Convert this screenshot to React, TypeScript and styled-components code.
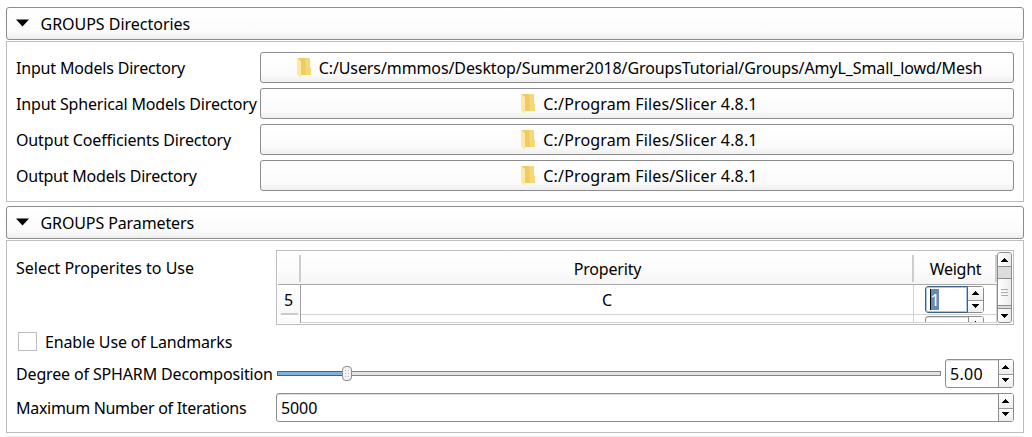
import React from "react";
import styled, { createGlobalStyle } from "styled-components";

const Global = createGlobalStyle`
  * { box-sizing: border-box; }
  body { margin: 0; background: #fff; color: #000; font: 16px/20px "Noto Sans", sans-serif; }
`;
const Page = styled.main`
  width: 1032px; height: 437px; padding: 7px 8px 0 6px; overflow: hidden;
  display: flex; flex-direction: column;
`;
const SectionHeader = styled.header`
  height: 33px; flex: none; display: flex; align-items: center; padding-left: 9px;
  border: 1px solid #8c8c8c; border-radius: 3px;
  background: linear-gradient(#fff, #fbfbfb 75%, #efefef);
`;
const HeaderArrow = styled.svg`
  width: 13px; height: 8px; margin: -2px 11.5px 0 0;
`;
const Panel = styled.section<{ $h: number; $pad: number }>`
  height: ${(p) => p.$h}px; flex: none; margin: 1px 0 4px; padding: ${(p) => p.$pad}px 9px 0;
  border: 1px solid #bdbdbd; display: flex; flex-direction: column;
`;
const NextSection = styled.div`
  height: 1px; flex: none; margin: -1px 2px 0; background: #ededed;
`;
const Text = styled.span<{ $s?: number }>`
  white-space: pre; letter-spacing: ${(p) => p.$s ?? 0}px;
`;
const DirectoryRow = styled.div`
  display: grid; grid-template-columns: 244px 754px; align-items: center;
  height: 31px; margin-bottom: 5px;
`;
const DirectoryButton = styled.button`
  height: 31px; padding: 0; display: flex; align-items: center; justify-content: center;
  border: 1px solid #8c8c8c; border-radius: 3px; font: inherit; color: inherit;
  background: linear-gradient(#fff, #fbfbfb 75%, #efefef);
`;
const FolderSlot = styled.svg`
  width: 26px; height: 22px; flex: none; margin-right: 1px;
`;
const FormRow = styled.div<{ $h: number; $gap: number; $top?: boolean }>`
  display: grid; grid-template-columns: 260px 738px;
  align-items: ${(p) => (p.$top ? "start" : "center")};
  height: ${(p) => p.$h}px; margin-bottom: ${(p) => p.$gap}px; flex: none;
`;
const TopLabel = styled.div`
  padding-top: 8px;
`;
const Table = styled.div`
  width: 738px; height: 75px; border: 1px solid #bdbdbd; padding: 1px;
  display: flex; background: #fff;
`;
const Grid = styled.div`
  width: 719px; height: 71px; overflow: hidden;
  display: grid; grid-template-columns: 23px 613px 83px; grid-template-rows: 33px 30px 8px;
`;
const HeadCell = styled.div`
  display: flex; justify-content: center; padding-top: 7px;
  border-bottom: 1px solid #a8a8a8;
  background:
    linear-gradient(#cdcdcd, #cdcdcd) right 3px / 2px 27px no-repeat,
    linear-gradient(#fff, #fbfbfb 60%, #f5f5f5);
`;
const RowHead = styled.div`
  display: flex; justify-content: center; padding: 5px 1px 0 0; border-right: 1px solid #a0a0a0;
  background:
    linear-gradient(#cbcbcb, #cbcbcb) 3px 28px / 17px 2px no-repeat,
    linear-gradient(#fff, #f8f8f8);
`;
const Cell = styled.div`
  display: flex; justify-content: center; padding-top: 5px;
  border-right: 1px solid #d2d2d2; border-bottom: 1px solid #d2d2d2;
`;
const WeightCell = styled(Cell)`
  justify-content: flex-start; padding: 1px 0 0 11px; overflow: hidden;
`;
const Spin = styled.div<{ $w: number; $h: number }>`
  width: ${(p) => p.$w}px; height: ${(p) => p.$h}px; flex: none; display: flex; overflow: hidden;
  border: 1px solid #8c8c8c; border-radius: 3px; background: #fff;
  box-shadow: inset 0 1px 0 #dedede;
`;
const SpinValue = styled.div`
  flex: 1; display: flex; align-items: center; padding-left: 4px;
`;
const FocusSpin = styled(Spin)`
  border: 0; box-shadow: none;
`;
const FocusValue = styled.div`
  width: 43px; height: 27px; padding: 2px 0 0 4px; border: 1px solid #3f5f80;
  border-radius: 3px 0 0 3px; box-shadow: inset 0 0 0 1px #a9c6e0;
`;
const Selection = styled.div`
  width: 9px; height: 21px; border-left: 1px solid #000; background: #628cb2; color: #fff;
  line-height: 22px; display: flex; justify-content: center;
`;
const Steps = styled.div<{ $framed?: boolean }>`
  width: ${(p) => (p.$framed ? 16 : 15)}px; display: grid; grid-template-rows: 1fr 1fr; background: #fafafa;
  border: solid #8c8c8c;
  border-width: ${(p) => (p.$framed ? "1px 1px 1px 0" : "0 0 0 1px")};
  border-radius: ${(p) => (p.$framed ? "0 3px 3px 0" : "0")};
`;
const Step = styled.div`
  display: flex; align-items: center; justify-content: center; padding-right: 1px;
  background: linear-gradient(#fff, #ededed);
  & + & { border-top: 1px solid #999; padding-bottom: 1px; }
`;
const ScrollBar = styled.div`
  width: 15px; height: 71px; display: flex; flex-direction: column;
  border: 1px solid #8c8c8c; border-radius: 3px; background: #dcdcdc; overflow: hidden;
`;
const ScrollButton = styled.div<{ $down?: boolean }>`
  height: 14px; flex: none; display: flex; align-items: center; justify-content: center;
  background: linear-gradient(90deg, #fff, #ececec);
  border: solid #8c8c8c; border-width: ${(p) => (p.$down ? "1px 0 0" : "0 0 1px")};
`;
const Thumb = styled.div`
  height: 28px; margin: 11px 0 2px; flex: none; display: flex; flex-direction: column; gap: 2px;
  align-items: center; justify-content: center;
  border: solid #8c8c8c; border-width: 1px 0;
  background: linear-gradient(90deg, #fff, #ececec);
`;
const Grip = styled.i`
  width: 7px; height: 1px; background: #ababab;
`;
const CheckRow = styled.label`
  height: 19px; flex: none; display: flex; align-items: center; gap: 8px;
  margin: 0 0 8px 2px;
`;
const CheckBox = styled.span`
  width: 19px; height: 19px; border: 1px solid #bdbdbd; background: #fff;
`;
const SliderRow = styled.div`
  display: flex; align-items: center; justify-content: space-between;
`;
const Slider = styled.svg`
  width: 666px; height: 17px; flex: none;
`;

const Folder = () => (
  <FolderSlot viewBox="0 0 26 22">
    <path d="M6 1H18V10L19 12V18H8Z" fill="#efcb66" />
    <path d="M13 1H18V10L19 12V18H14Z" fill="#f6d878" />
    <path d="M5 1L9 4V21L5 18Z" fill="#ffe9a2" />
  </FolderSlot>
);
const Arrow = ({ up }: { up?: boolean }) => (
  <svg width="7" height="4" viewBox="0 0 7 4" shapeRendering="crispEdges">
    <path d={up ? "M3 0h1v1h1v1h1v1h1v1H0V3h1V2h1V1h1z" : "M0 0h7v1H6v1H5v1H4v1H3V3H2V2H1V1H0z"} />
  </svg>
);
const Stepper = ({ framed }: { framed?: boolean }) => (
  <Steps $framed={framed}>
    <Step><Arrow up /></Step>
    <Step><Arrow /></Step>
  </Steps>
);
const Header = ({ title, spacing }: { title: string; spacing: number }) => (
  <SectionHeader>
    <HeaderArrow viewBox="0 0 13 8"><path d="M0 .5H13L6.5 7.5Z" /></HeaderArrow>
    <Text $s={spacing}>{title}</Text>
  </SectionHeader>
);

const slicer = "C:/Program Files/Slicer 4.8.1";
const directories = [
  { label: "Input Models Directory", s: -0.18, path: "C:/Users/mmmos/Desktop/Summer2018/GroupsTutorial/Groups/AmyL_Small_lowd/Mesh", ps: -0.1 },
  { label: "Input Spherical Models Directory", s: -0.17, path: slicer, ps: 0.15 },
  { label: "Output Coefficients Directory", s: -0.14, path: slicer, ps: 0.15 },
  { label: "Output Models Directory", s: -0.22, path: slicer, ps: 0.15 },
];

export default function App() {
  return (
    <>
      <Global />
      <Page>
        <Header title="GROUPS Directories" spacing={-0.02} />
        <Panel $h={161} $pad={10}>
          {directories.map((d) => (
            <DirectoryRow key={d.label}>
              <Text $s={d.s}>{d.label}</Text>
              <DirectoryButton><Folder /><Text $s={d.ps}>{d.path}</Text></DirectoryButton>
            </DirectoryRow>
          ))}
        </Panel>
        <Header title="GROUPS Parameters" spacing={-0.11} />
        <Panel $h={193} $pad={9}>
          <FormRow $h={75} $gap={7} $top>
            <TopLabel><Text $s={-0.02}>Select Properites to Use</Text></TopLabel>
            <Table>
              <Grid>
                <HeadCell />
                <HeadCell><Text $s={-0.19}>Properity</Text></HeadCell>
                <HeadCell><Text $s={-0.29}>Weight</Text></HeadCell>
                <RowHead>5</RowHead>
                <Cell>C</Cell>
                <WeightCell>
                  <FocusSpin $w={59} $h={27}>
                    <FocusValue><Selection>1</Selection></FocusValue>
                    <Stepper framed />
                  </FocusSpin>
                </WeightCell>
                <RowHead />
                <Cell />
                <WeightCell>
                  <Spin $w={59} $h={27}><SpinValue /><Stepper /></Spin>
                </WeightCell>
              </Grid>
              <ScrollBar>
                <ScrollButton><Arrow up /></ScrollButton>
                <Thumb><Grip /><Grip /><Grip /></Thumb>
                <ScrollButton $down><Arrow /></ScrollButton>
              </ScrollBar>
            </Table>
          </FormRow>
          <CheckRow>
            <CheckBox />
            <Text $s={-0.15}>Enable Use of Landmarks</Text>
          </CheckRow>
          <FormRow $h={29} $gap={5}>
            <Text $s={-0.15}>Degree of SPHARM Decomposition</Text>
            <SliderRow>
              <Slider viewBox="0 0 666 17">
                <rect x="1.5" y="6.5" width="663" height="4" fill="#e2e2e2" stroke="#858585" />
                <rect x="1.5" y="6.5" width="66" height="4" fill="#7fb2dd" stroke="#45617c" />
                <rect x="66.5" y="1.5" width="9" height="14" rx="3.5" fill="#f3f3f3" stroke="#8c8c8c" />
                <path d="M69 5.5h1m2 0h1M69 8.5h1m2 0h1M69 11.5h1m2 0h1" stroke="#b5b5b5" />
              </Slider>
              <Spin $w={69} $h={29}>
                <SpinValue><Text $s={0.3}>5.00</Text></SpinValue><Stepper />
              </Spin>
            </SliderRow>
          </FormRow>
          <FormRow $h={29} $gap={0}>
            <Text $s={-0.3}>Maximum Number of Iterations</Text>
            <Spin $w={738} $h={29}>
              <SpinValue><Text $s={-0.1}>5000</Text></SpinValue><Stepper />
            </Spin>
          </FormRow>
        </Panel>
        <NextSection />
      </Page>
    </>
  );
}
